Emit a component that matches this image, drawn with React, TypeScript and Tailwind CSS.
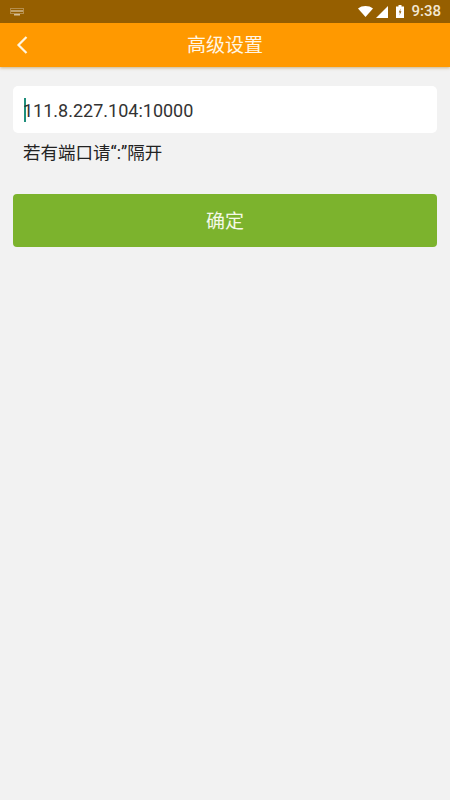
const font = '[font-family:Roboto,"Noto_Sans_CJK_SC",sans-serif]'

function StatusBar() {
  return (
    <div className="h-[23px] bg-[#965f00] flex items-center justify-between pl-[10px] pr-[9px] shrink-0">
      <svg width="14" height="8" viewBox="0 0 14 8" className="opacity-60">
        <rect x="0.5" y="0.5" width="13" height="5" fill="none" stroke="#fff" strokeWidth="1" strokeDasharray="1 1" />
        <rect x="1" y="2" width="12" height="2" fill="#fff" opacity="0.7" />
        <rect x="4" y="6" width="6" height="1.5" fill="#fff" />
      </svg>
      <div className="flex items-center">
        <svg width="15" height="11" viewBox="0 0 15 11" className="mr-[3px]">
          <path d="M0 2.5 C4 -0.8 11 -0.8 15 2.5 L7.5 11 Z" fill="#fff" />
        </svg>
        <svg width="12" height="12" viewBox="0 0 12 12" className="mr-[8px]">
          <path d="M12 0 V12 H0 Z" fill="#fff" />
        </svg>
        <svg width="8" height="13" viewBox="0 0 8 13" className="mr-[7px]">
          <path d="M2.5 0 H5.5 V1.5 H8 V13 H0 V1.5 H2.5 Z" fill="#fff" />
          <path d="M4.6 3.5 L2.8 7.5 H4 L3.4 10.5 L5.4 6.3 H4.2 Z" fill="#965f00" />
        </svg>
        <span className="text-[15px] leading-none text-[#f3e7d2] font-medium">9:38</span>
      </div>
    </div>
  )
}

function Header() {
  return (
    <div className="relative h-[44px] bg-[#ff9900] shadow-[0_1px_3px_rgba(150,100,0,0.45)] flex items-center justify-center shrink-0">
      <svg width="14" height="20" viewBox="0 0 14 20" className="absolute left-[15px] top-[12px]">
        <path d="M11.5 2 L3.5 10 L11.5 18" fill="none" stroke="#fff6e0" strokeWidth="2.2" />
      </svg>
      <span className="text-[19px] leading-[28px] text-[#fff6e5] pt-[1px]">高级设置</span>
    </div>
  )
}

export default function App() {
  return (
    <div className={`w-[450px] h-[800px] bg-[#f2f2f2] flex flex-col overflow-hidden ${font}`}>
      <StatusBar />
      <Header />
      <div className="flex flex-col px-[13px] pt-[19px]">
        <div className="h-[47px] bg-white rounded-[5px] flex items-center pl-[11px]">
          <div className="w-[2px] h-[24px] bg-[#1f8f7c] shrink-0" />
          <span className="text-[18px] leading-[24px] text-[#333] -ml-[3px] pt-[2px]">111.8.227.104:10000</span>
        </div>
        <div className="text-[17.5px] leading-[24px] text-[#222] pl-[10px] mt-[8px]">若有端口请“:”隔开</div>
        <div className="h-[53px] mt-[29px] bg-[#7cb32d] rounded-[4px] flex items-center justify-center text-[19px] leading-[28px] pt-[3px] text-[#f4f8e8]">
          确定
        </div>
      </div>
    </div>
  )
}
